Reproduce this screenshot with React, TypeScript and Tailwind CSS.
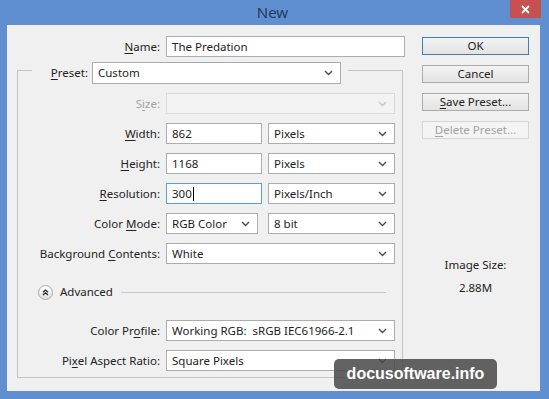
import React from "react";

const Chevron = ({ disabled }: { disabled?: boolean }) => (
  <svg width="9" height="6" viewBox="0 0 9 6" className="shrink-0">
    <path
      d="M1 1l3.5 3.5L8 1"
      fill="none"
      stroke={disabled ? "#c8c8c8" : "#4d4d4d"}
      strokeWidth="1.4"
    />
  </svg>
);

const Select = ({
  value,
  className = "",
  disabled,
}: {
  value?: string;
  className?: string;
  disabled?: boolean;
}) => (
  <div
    className={`flex h-[21px] items-center justify-between border pl-[5px] pr-[7px] ${
      disabled ? "border-[#d9d9d9] bg-[#f3f3f3]" : "border-[#acacac] bg-white"
    } ${className}`}
  >
    <span className="truncate whitespace-pre">{value}</span>
    <Chevron disabled={disabled} />
  </div>
);

const Input = ({
  value,
  className = "",
  focused,
}: {
  value: string;
  className?: string;
  focused?: boolean;
}) => (
  <div
    className={`flex h-[21px] items-center border bg-white pl-[5px] ${
      focused ? "border-[#569de5]" : "border-[#abadb3]"
    } ${className}`}
  >
    <span>{value}</span>
    {focused && <span className="ml-[1px] h-[14px] w-[1px] bg-black" />}
  </div>
);

// label text with the access key underlined
const Label = ({
  pre = "",
  k = "",
  post = "",
  disabled,
  className = "",
}: {
  pre?: string;
  k?: string;
  post?: string;
  disabled?: boolean;
  className?: string;
}) => (
  <span
    className={`text-right ${disabled ? "text-[#a3a3a3]" : ""} ${className}`}
  >
    {pre}
    {k && <span className="underline underline-offset-2">{k}</span>}
    {post}
  </span>
);

const Button = ({
  children,
  primary,
  disabled,
}: {
  children: React.ReactNode;
  primary?: boolean;
  disabled?: boolean;
}) => (
  <div
    className={`flex h-[18px] items-center justify-center border ${
      primary
        ? "border-[#3c7fb1] bg-gradient-to-b from-[#f3f3f3] to-[#e3e3e3]"
        : disabled
        ? "border-[#d5d5d5] bg-[#f4f4f4] text-[#a3a3a3]"
        : "border-[#acacac] bg-gradient-to-b from-[#f3f3f3] to-[#e3e3e3]"
    }`}
  >
    {children}
  </div>
);

const App = () => {
  return (
    <div className="relative h-[399px] w-[549px] overflow-hidden bg-[#5f8fd1] font-['Noto_Sans',sans-serif] text-[11.5px] leading-[16px] text-[#222]">
      {/* title bar */}
      <div className="grid h-[25px] grid-cols-[1fr_auto_1fr] items-start">
        <div />
        <span className="pr-[4px] pt-[2px] text-[15px] leading-[20px] text-[#243a5c]">
          New
        </span>
        <div className="flex justify-end pr-[8px]">
          <div className="flex h-[18px] w-[31px] items-center justify-center bg-[#c75050]">
            <svg width="9" height="9" viewBox="0 0 9 9">
              <path
                d="M1 1l7 7M8 1L1 8"
                stroke="#fff"
                strokeWidth="1.8"
              />
            </svg>
          </div>
        </div>
      </div>

      {/* client area */}
      <div className="ml-[7px] flex h-[366px] w-[533px] bg-[#f0f0f0] pl-[10px] pt-[11px]">
        <div className="w-[388px]">
          <div className="grid grid-cols-[143px_239px] items-center gap-x-[6px]">
            <Label k="N" post="ame:" />
            <Input value="The Predation" className="h-[20px]" />
          </div>

          <fieldset className="w-[386px] border border-[#c4c4c4] pb-[6px] pr-[7px] pt-[9px]">
            <legend className="ml-[14px] pl-[14px] pr-[7px] pt-[5px]">
              <div className="flex items-center gap-[4px]">
                <Label k="P" post="reset:" className="w-[42px]" />
                <Select value="Custom" className="h-[22px] w-[249px]" />
              </div>
            </legend>

            <div className="grid grid-cols-[142px_1fr] items-center gap-x-[6px] gap-y-[9px]">
              <Label pre="S" k="i" post="ze:" disabled />
              <Select disabled />

              <Label k="W" post="idth:" />
              <div className="flex gap-[6px]">
                <Input value="862" className="w-[96px]" />
                <Select value="Pixels" className="flex-1" />
              </div>

              <Label k="H" post="eight:" />
              <div className="flex gap-[6px]">
                <Input value="1168" className="w-[96px]" />
                <Select value="Pixels" className="flex-1" />
              </div>

              <Label k="R" post="esolution:" />
              <div className="flex gap-[6px]">
                <Input value="300" className="w-[96px]" focused />
                <Select value="Pixels/Inch" className="flex-1" />
              </div>

              <Label pre="Color " k="M" post="ode:" />
              <div className="flex gap-[10px]">
                <Select value="RGB Color" className="w-[92px]" />
                <Select value="8 bit" className="flex-1" />
              </div>

              <Label pre="Background " k="C" post="ontents:" />
              <Select value="White" />
            </div>

            <div className="mt-[20px] flex items-center pl-[20px] pr-[9px]">
              <div className="flex h-[15px] w-[15px] items-center justify-center rounded-full border border-[#a8a8a8] bg-gradient-to-b from-white to-[#dedede]">
                <svg width="7" height="7" viewBox="0 0 7 7">
                  <path
                    d="M1 3.2l2.5-2.2L6 3.2M1 6l2.5-2.2L6 6"
                    fill="none"
                    stroke="#222"
                    strokeWidth="1.2"
                  />
                </svg>
              </div>
              <span className="ml-[7px]">Advanced</span>
              <div className="ml-[8px] flex-1 border-t border-[#c8c8c8]" />
            </div>

            <div className="mt-[20px] grid grid-cols-[142px_1fr] items-center gap-x-[6px] gap-y-[9px]">
              <Label pre="Color Pr" k="o" post="file:" />
              <Select value="Working RGB:  sRGB IEC61966-2.1" />

              <Label pre="Pi" k="x" post="el Aspect Ratio:" />
              <Select value="Square Pixels" />
            </div>
          </fieldset>
        </div>

        <div className="ml-[17px] flex w-[107px] flex-col pt-[1px]">
          <div className="flex flex-col gap-[10px]">
            <Button primary>OK</Button>
            <Button>Cancel</Button>
            <Button>
              <span>
                <span className="underline underline-offset-2">S</span>ave
                Preset...
              </span>
            </Button>
            <Button disabled>
              <span>
                <span className="underline underline-offset-2">D</span>elete
                Preset...
              </span>
            </Button>
          </div>
          <div className="mt-[118px] text-center">Image Size:</div>
          <div className="mt-[7px] text-center">2.88M</div>
        </div>
      </div>

      {/* watermark */}
      <div className="absolute left-[334px] top-[359px] flex h-[30px] w-[163px] items-center justify-center rounded-[5px] bg-[rgba(72,72,72,0.85)]">
        <span className="pb-[1px] font-['Liberation_Sans',sans-serif] text-[16px] font-bold text-white">
          docusoftware.info
        </span>
      </div>
    </div>
  );
};

export default App;
